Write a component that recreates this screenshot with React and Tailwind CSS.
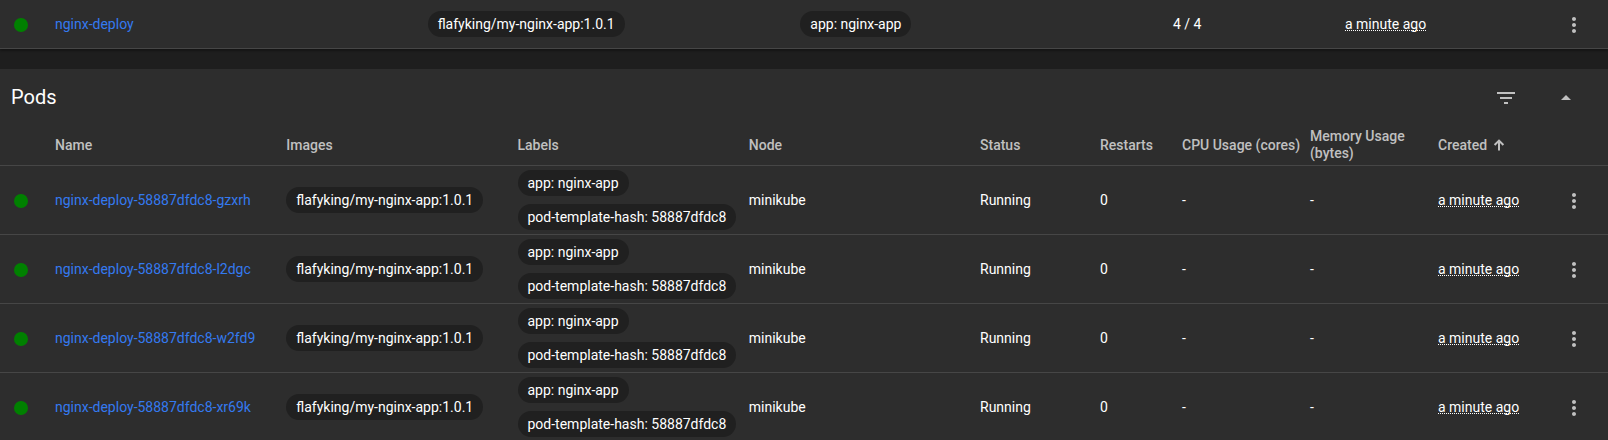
import { clsx } from 'clsx';

const deployments = [
  { name: 'nginx-deploy', image: 'flafyking/my-nginx-app:1.0.1', labels: ['app: nginx-app'], pods: '4 / 4', created: 'a minute ago' },
];

const pods = ['gzxrh', 'l2dgc', 'w2fd9', 'xr69k'].map((id) => ({
  name: `nginx-deploy-58887dfdc8-${id}`,
  image: 'flafyking/my-nginx-app:1.0.1',
  labels: ['app: nginx-app', 'pod-template-hash: 58887dfdc8'],
  node: 'minikube',
  status: 'Running',
  restarts: 0,
  cpu: '-',
  memory: '-',
  created: 'a minute ago',
}));

function Icon({ d, className }) {
  return (
    <svg viewBox="0 0 24 24" aria-hidden="true" className={clsx('shrink-0 fill-current', className)}>
      <path d={d} />
    </svg>
  );
}

const MORE = 'M12 8c1.1 0 2-.9 2-2s-.9-2-2-2-2 .9-2 2 .9 2 2 2zm0 2c-1.1 0-2 .9-2 2s.9 2 2 2 2-.9 2-2-.9-2-2-2zm0 6c-1.1 0-2 .9-2 2s.9 2 2 2 2-.9 2-2-.9-2-2-2z';
const FILTER = 'M10 18h4v-2h-4v2zM3 6v2h18V6H3zm3 7h12v-2H6v2z';
const DROP_UP = 'M7 14l5-5 5 5z';

function SortArrow() {
  return (
    <svg viewBox="0 0 16 16" aria-hidden="true" className="size-4 shrink-0 fill-none stroke-current stroke-2">
      <path d="M8 13.5V3.5M3.6 8L8 3.6L12.4 8" />
    </svg>
  );
}

function Chip({ children }) {
  return (
    <span className="flex h-[26px] items-center whitespace-nowrap rounded-full bg-[#202020] px-2.5">{children}</span>
  );
}

function Chips({ items }) {
  return (
    <div className="flex flex-wrap gap-x-1 gap-y-2 py-1">
      {items.map((item) => (
        <Chip key={item}>{item}</Chip>
      ))}
    </div>
  );
}

function StatusCell() {
  return (
    <td className="pl-3.5 pt-0.5">
      <span role="img" aria-label="Healthy" className="block size-3.5 rounded-full bg-[#008000]" />
    </td>
  );
}

function NameCell({ name }) {
  return (
    <td>
      <a href={`#${name}`} className="text-[#347af0]">{name}</a>
    </td>
  );
}

function CreatedCell({ children }) {
  return (
    <td>
      <span className="underline decoration-dotted decoration-1 underline-offset-1 [text-decoration-skip-ink:none]">{children}</span>
    </td>
  );
}

function MenuCell({ name }) {
  return (
    <td className="pr-[22px] pt-0.5">
      <button type="button" aria-label={`Actions for ${name}`} className="ml-auto block text-[#c0c0c0]">
        <Icon d={MORE} className="size-6" />
      </button>
    </td>
  );
}

function Row({ children }) {
  return <tr className="h-[49px] [&>td]:border-b [&>td]:border-[#464646]">{children}</tr>;
}

function Deployments() {
  return (
    <section aria-label="Deployments" className="bg-[#2d2d2d] shadow-[0_2px_2px_rgba(0,0,0,0.3)]">
      <table className="w-full table-fixed border-separate border-spacing-0">
        <colgroup>
          <col className="w-[55px]" />
          <col />
          <col />
          <col />
          <col className="w-[172px]" />
          <col className="w-[173px]" />
          <col className="w-[90px]" />
        </colgroup>
        <tbody>
          {deployments.map((item) => (
            <Row key={item.name}>
              <StatusCell />
              <NameCell name={item.name} />
              <td><Chips items={[item.image]} /></td>
              <td><Chips items={item.labels} /></td>
              <td>{item.pods}</td>
              <CreatedCell>{item.created}</CreatedCell>
              <MenuCell name={item.name} />
            </Row>
          ))}
        </tbody>
      </table>
    </section>
  );
}

function Pods() {
  return (
    <section aria-labelledby="pods-title" className="bg-[#2d2d2d]">
      <header className="flex h-14 items-center justify-between pl-[11px] pr-[30px]">
        <h2 id="pods-title" className="text-xl">Pods</h2>
        <div className="flex gap-9 pt-0.5 text-[#c0c0c0]">
          <button type="button" aria-label="Filter pods"><Icon d={FILTER} className="size-6" /></button>
          <button type="button" aria-label="Collapse pods"><Icon d={DROP_UP} className="size-6" /></button>
        </div>
      </header>
      <table className="w-full table-fixed border-separate border-spacing-0">
        <colgroup>
          <col className="w-[55px]" />
          <col />
          <col />
          <col />
          <col />
          <col className="w-[120px]" />
          <col className="w-[82px]" />
          <col className="w-[128px]" />
          <col className="w-[128px]" />
          <col className="w-[100px]" />
          <col className="w-[70px]" />
        </colgroup>
        <thead>
          <tr className="h-[41px] text-left leading-[17px] text-[#c0c0c0] *:border-b *:border-[#464646] [&>th]:font-medium">
            <td />
            <th scope="col">Name</th>
            <th scope="col">Images</th>
            <th scope="col">Labels</th>
            <th scope="col">Node</th>
            <th scope="col">Status</th>
            <th scope="col">Restarts</th>
            <th scope="col" className="whitespace-nowrap">CPU Usage (cores)</th>
            <th scope="col">Memory Usage (bytes)</th>
            <th scope="col" aria-sort="ascending">
              <button type="button" className="flex items-center gap-1">
                Created
                <SortArrow />
              </button>
            </th>
            <td />
          </tr>
        </thead>
        <tbody>
          {pods.map((pod) => (
            <Row key={pod.name}>
              <StatusCell />
              <NameCell name={pod.name} />
              <td><Chips items={[pod.image]} /></td>
              <td><Chips items={pod.labels} /></td>
              <td>{pod.node}</td>
              <td>{pod.status}</td>
              <td>{pod.restarts}</td>
              <td>{pod.cpu}</td>
              <td>{pod.memory}</td>
              <CreatedCell>{pod.created}</CreatedCell>
              <MenuCell name={pod.name} />
            </Row>
          ))}
        </tbody>
      </table>
    </section>
  );
}

export default function App() {
  return (
    <main className="flex min-h-screen flex-col gap-5 bg-[#1e1e1e] font-[Roboto,sans-serif] text-sm text-white">
      <Deployments />
      <Pods />
    </main>
  );
}
